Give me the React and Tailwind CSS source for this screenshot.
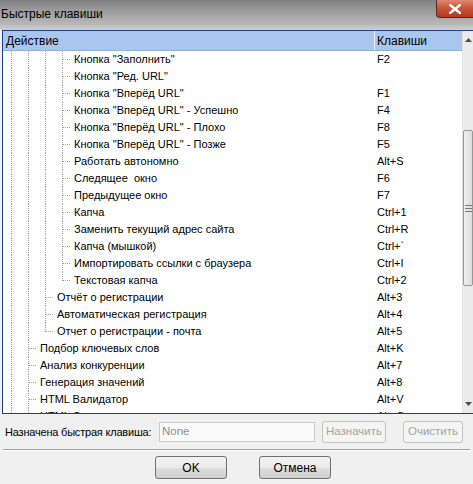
import React from "react";

const rows = [
  { t: 'Кнопка "Заполнить"', k: "F2", g: "vvvT" },
  { t: 'Кнопка "Ред. URL"', k: "", g: "vvvT" },
  { t: 'Кнопка "Вперёд URL"', k: "F1", g: "vvvT" },
  { t: 'Кнопка "Вперёд URL" - Успешно', k: "F4", g: "vvvT" },
  { t: 'Кнопка "Вперёд URL" - Плохо', k: "F8", g: "vvvT" },
  { t: 'Кнопка "Вперёд URL" - Позже', k: "F5", g: "vvvT" },
  { t: "Работать автономно", k: "Alt+S", g: "vvvT" },
  { t: "Следящее  окно", k: "F6", g: "vvvT" },
  { t: "Предыдущее окно", k: "F7", g: "vvvT" },
  { t: "Капча", k: "Ctrl+1", g: "vvvT" },
  { t: "Заменить текущий адрес сайта", k: "Ctrl+R", g: "vvvT" },
  { t: "Капча (мышкой)", k: "Ctrl+`", g: "vvvT" },
  { t: "Импортировать ссылки с браузера", k: "Ctrl+I", g: "vvvT" },
  { t: "Текстовая капча", k: "Ctrl+2", g: "vvvL" },
  { t: "Отчёт о регистрации", k: "Alt+3", g: "vvT" },
  { t: "Автоматическая регистрация", k: "Alt+4", g: "vvT" },
  { t: "Отчет о регистрации - почта", k: "Alt+5", g: "vvL" },
  { t: "Подбор ключевых слов", k: "Alt+K", g: "vT" },
  { t: "Анализ конкуренции", k: "Alt+7", g: "vT" },
  { t: "Генерация значений", k: "Alt+8", g: "vT" },
  { t: "HTML Валидатор", k: "Alt+V", g: "vT" },
  { t: "HTML О...", k: "Alt+O", g: "vT" },
];

// one 17px tree guide cell
const Guide = ({ type }) => (
  <svg width="17" height="17" className="shrink-0" shapeRendering="crispEdges">
    <line
      x1="8.5"
      y1="0"
      x2="8.5"
      y2={type === "L" ? 9 : 17}
      stroke="#a0a0a0"
      strokeDasharray="1 1"
    />
    {type !== "v" && (
      <line x1="9" y1="8.5" x2="17" y2="8.5" stroke="#a0a0a0" strokeDasharray="1 1" />
    )}
  </svg>
);

const Row = ({ row }) => (
  <div className="flex h-[17px] shrink-0 items-center">
    <div className="flex w-[372px] items-center">
      {row.g.split("").map((c, i) => (
        <Guide key={i} type={c} />
      ))}
      <span className="pl-[3px] whitespace-pre">{row.t}</span>
    </div>
    <span className="pl-[2px]">{row.k}</span>
  </div>
);

export default function App() {
  return (
    <div
      className="w-[473px] h-[484px] bg-[#f0f0f0] flex flex-col overflow-hidden text-[11px] text-black"
      style={{ fontFamily: '"Liberation Sans", Arial, sans-serif' }}
    >
      {/* title bar */}
      <div className="relative h-[25px] shrink-0 bg-[linear-gradient(180deg,#7f7f7f_0%,#9a9a9a_40%,#b9b9b9_100%)] flex items-center">
        <span className="text-[12px] text-black pl-[1px] pt-[3px]">Быстрые клавиши</span>
        <div className="absolute right-0 top-0 w-[37px] h-[18px] rounded-bl-[4px] border border-t-0 border-r-0 border-[#5a2a20] bg-[linear-gradient(180deg,#e08a70_0%,#c9553a_45%,#b03a22_100%)] flex items-center justify-center">
          <svg width="12" height="10" viewBox="0 0 12 10">
            <path d="M1 1 L11 9 M11 1 L1 9" stroke="#fff" strokeWidth="2.6" strokeLinecap="square" />
          </svg>
        </div>
      </div>
      <div className="h-[5px] shrink-0 bg-[linear-gradient(180deg,#bdbdbd,#cfcfcf)]" />

      {/* tree list */}
      <div className="ml-[2px] h-[384px] shrink-0 border-l border-t border-b border-[#1d3f8e] flex bg-white">
        <div className="w-[459px] flex flex-col overflow-hidden">
          <div className="h-[20px] shrink-0 flex items-center bg-[#a9c7ee] border-b border-[#8fb0dc] text-[12px]">
            <span className="w-[372px] pl-[3px] border-r border-[#e9f1fb] h-full flex items-center">Действие</span>
            <span className="pl-[2px]">Клавиши</span>
          </div>
          {rows.map((r, i) => (
            <Row key={i} row={r} />
          ))}
        </div>
        {/* scrollbar */}
        <div className="flex-1 flex flex-col bg-[#ebebeb] border-l border-[#e3e3e3]">
          <div className="h-[18px] flex items-center justify-center text-[#4d4d4d]">
            <svg width="7" height="4" viewBox="0 0 7 4"><path d="M3.5 0 L7 4 L0 4 Z" fill="#4d4d4d" /></svg>
          </div>
          <div className="h-[81px]" />
          <div className="h-[156px] border border-[#979797] rounded-[2px] bg-[linear-gradient(90deg,#f0f0f0,#dcdcdc)] flex items-center justify-center">
            <div className="flex flex-col gap-[2px]">
              <div className="w-[7px] h-px bg-[#7a7a7a]" />
              <div className="w-[7px] h-px bg-[#7a7a7a]" />
              <div className="w-[7px] h-px bg-[#7a7a7a]" />
            </div>
          </div>
          <div className="flex-1" />
          <div className="h-[18px] flex items-center justify-center">
            <svg width="7" height="4" viewBox="0 0 7 4"><path d="M0 0 L7 0 L3.5 4 Z" fill="#4d4d4d" /></svg>
          </div>
        </div>
      </div>

      {/* assigned key row */}
      <div className="mt-[7px] h-[22px] shrink-0 flex items-center pl-[5px]">
        <span className="w-[154px] whitespace-nowrap text-[11px] tracking-[-0.2px]">Назначена быстрая клавиша:</span>
        <div className="w-[156px] h-[20px] border border-[#c9c9c9] bg-[#fafafa] flex items-center pl-[2px] text-[#8d8d8d] text-[11.5px]">
          None
        </div>
        <button className="ml-[7px] w-[64px] h-[22px] border border-[#c3c3c3] rounded-[3px] bg-[#f4f4f4] text-[#a3a3a3] text-[11.5px]">
          Назначить
        </button>
        <button className="ml-[17px] w-[60px] h-[22px] border border-[#c3c3c3] rounded-[3px] bg-[#f4f4f4] text-[#a3a3a3] text-[11.5px]">
          Очистить
        </button>
      </div>

      <div className="mt-[6px] mx-[3px] h-[2px] shrink-0 border-t border-[#a0a0a0] border-b border-b-white" />

      {/* dialog buttons */}
      <div className="mt-[5px] flex pl-[155px] gap-[32px]">
        <button className="w-[72px] h-[23px] border border-[#707070] rounded-[3px] bg-[linear-gradient(180deg,#f2f2f2_0%,#ebebeb_50%,#dddddd_51%,#cfcfcf_100%)] text-[12px]">
          OK
        </button>
        <button className="w-[72px] h-[23px] border border-[#707070] rounded-[3px] bg-[linear-gradient(180deg,#f2f2f2_0%,#ebebeb_50%,#dddddd_51%,#cfcfcf_100%)] text-[12px]">
          Отмена
        </button>
      </div>
    </div>
  );
}
